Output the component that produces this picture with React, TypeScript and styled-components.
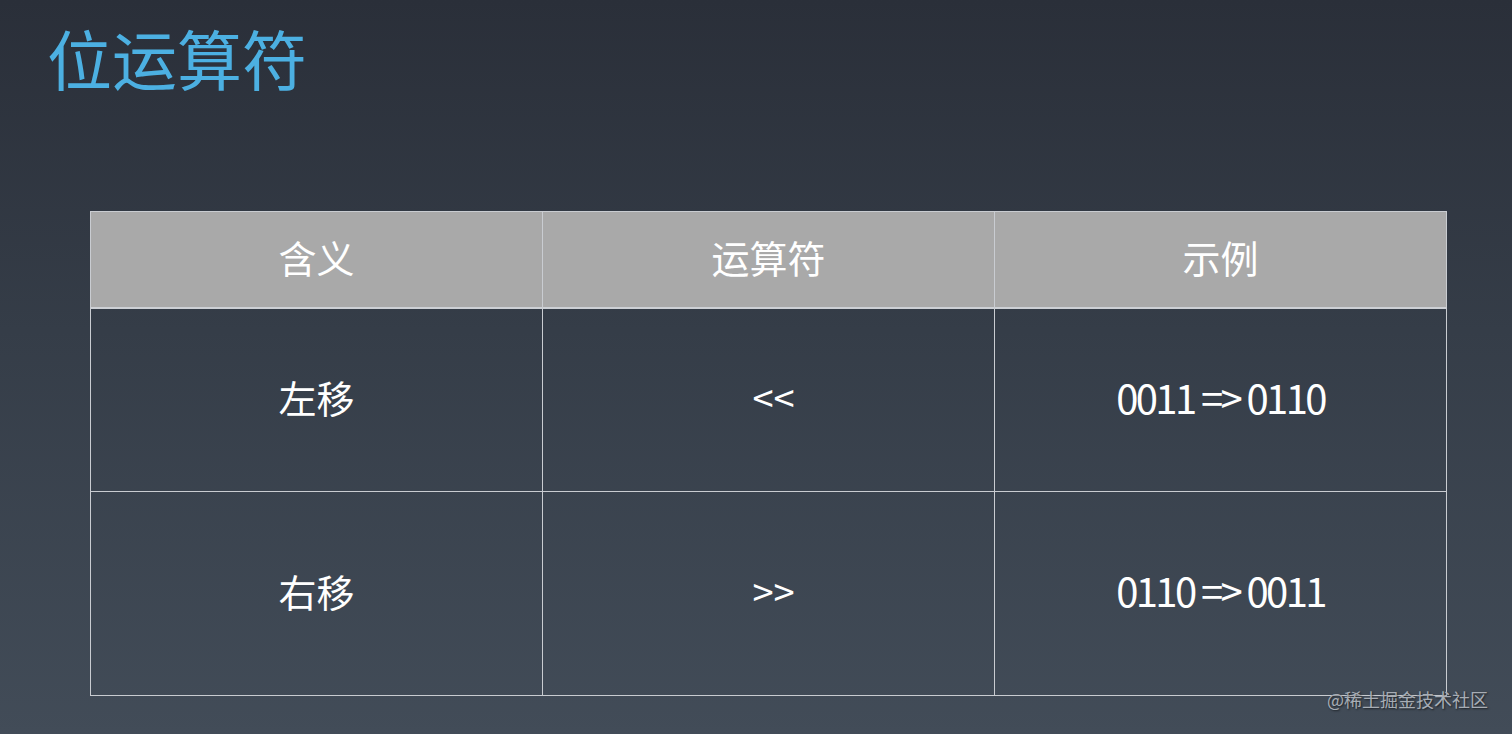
import React from "react";
import styled, { createGlobalStyle } from "styled-components";

const Global = createGlobalStyle`
  html, body { margin: 0; padding: 0; }
  body {
    width: 1512px;
    height: 734px;
    overflow: hidden;
    font-family: "Noto Sans CJK SC", "Noto Sans", sans-serif;
  }
`;

const Slide = styled.div`
  position: relative;
  width: 1512px;
  height: 734px;
  box-sizing: border-box;
  background: linear-gradient(180deg, #2a2f39 0%, #353d48 45%, #424c58 100%);
  padding: 12px 0 0 47px;
  display: flex;
  flex-direction: column;
`;

const Title = styled.h1`
  margin: 0;
  font-size: 65px;
  line-height: 90px;
  font-weight: 400;
  color: #4cb0e2;
`;

const Table = styled.div`
  margin: 109px 0 0 43px;
  width: 1356px;
  display: grid;
  grid-template-columns: 452px 452px 452px;
  grid-template-rows: 97px 183px 204px;
  border-top: 1px solid #c9ccd1;
  border-left: 1px solid #c9ccd1;
`;

const Cell = styled.div<{ $head?: boolean; $shift?: number }>`
  display: flex;
  align-items: center;
  justify-content: center;
  box-sizing: border-box;
  padding-bottom: 7px;
  padding-left: ${(p) => (p.$shift ? `${p.$shift}px` : "0")};
  border-right: 1px solid #c9ccd1;
  border-bottom: ${(p) => (p.$head ? "2px solid #cdd0d5" : "1px solid #c9ccd1")};
  background: ${(p) => (p.$head ? "#a9a9a9" : "transparent")};
  color: #ffffff;
  font-size: 38px;
`;

const Num = styled.span`
  font-size: 40px;
  letter-spacing: -2.6px;
`;

const Watermark = styled.div`
  position: absolute;
  right: 24px;
  bottom: 22px;
  font-size: 18px;
  color: #a7adb5;
  text-shadow: 1px 1px 2px rgba(0, 0, 0, 0.6);
`;

export default function App() {
  return (
    <>
      <Global />
      <Slide>
        <Title>位运算符</Title>
        <Table>
          <Cell $head>含义</Cell>
          <Cell $head>运算符</Cell>
          <Cell $head>示例</Cell>
          <Cell>左移</Cell>
          <Cell $shift={10}>&lt;&lt;</Cell>
          <Cell>
            <Num>0011 =&gt; 0110</Num>
          </Cell>
          <Cell>右移</Cell>
          <Cell $shift={10}>&gt;&gt;</Cell>
          <Cell>
            <Num>0110 =&gt; 0011</Num>
          </Cell>
        </Table>
        <Watermark>@稀土掘金技术社区</Watermark>
      </Slide>
    </>
  );
}
